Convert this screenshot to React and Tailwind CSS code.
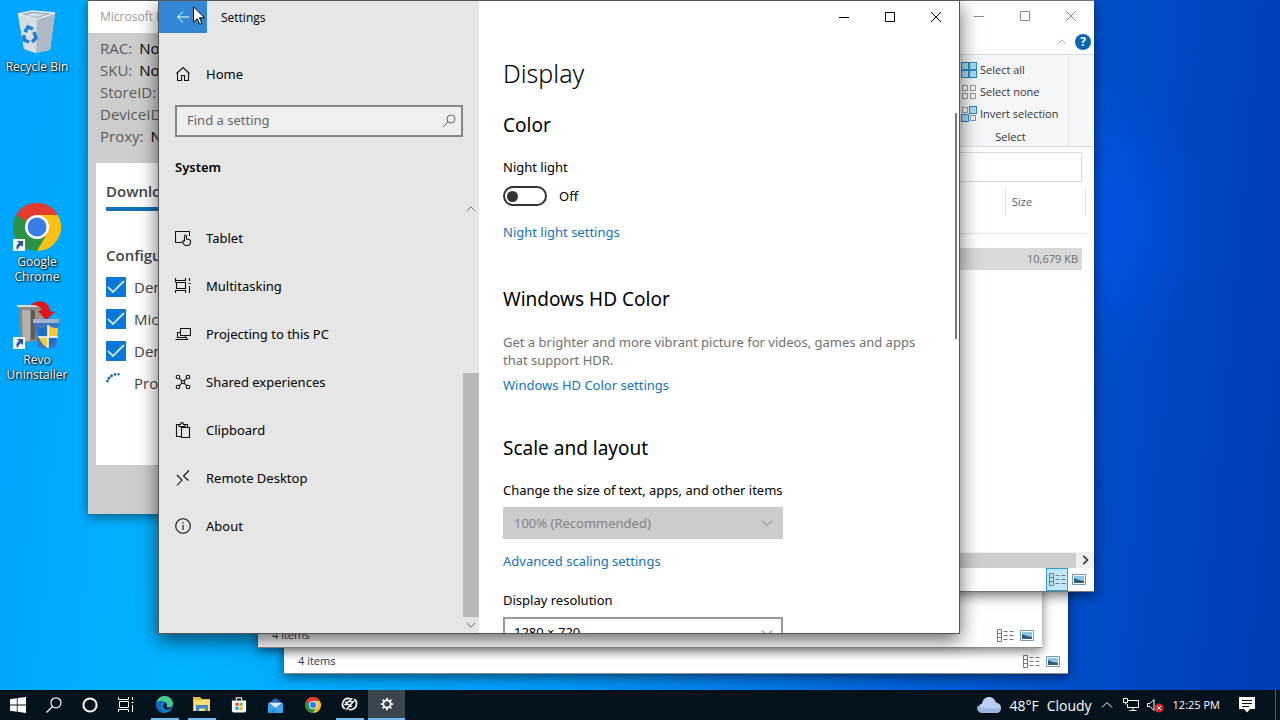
import React, { useState } from 'react';

const navItems = [
  { label: 'Tablet', icon: 'tablet' },
  { label: 'Multitasking', icon: 'multitasking' },
  { label: 'Projecting to this PC', icon: 'projecting' },
  { label: 'Shared experiences', icon: 'shared' },
  { label: 'Clipboard', icon: 'clipboard' },
  { label: 'Remote Desktop', icon: 'remote' },
  { label: 'About', icon: 'about' },
];

const navPaths = {
  home: <path d="M1.500 7.500 8 1.500l6.500 6M2.500 6.500v8h4v-5h3v5h4v-8" />,
  tablet: (
    <>
      <path d="M7 12.500H.5v-11h14V6" />
      <path d="M9.500 11V6.200c0-1.600 2-1.600 2 0V9l3 .8c.8.200 1 .7 1 1.400v1.300c0 1.800-1.200 3-3 3h-1.200c-1.200 0-2-.5-2.600-1.500L7.500 11.500c.5-1 1.400-.8 2 0" />
    </>
  ),
  multitasking: <path d="M.5 0v2.500h10V0M.5 15v-2.500h10V15M1.500 4.500h9v6h-9zM.5 2.500v2M14.500 0v3M14.500 8v7M13.500 5.500h2" />,
  projecting: <path d="M5.500 2.500h10v7h-10zM5.500 6.500h-3v5h8v-2M.5 13.500h12l-1.500-2" />,
  shared: (
    <>
      <circle cx="3" cy="3" r="1.800" />
      <circle cx="13" cy="3" r="1.800" />
      <circle cx="3" cy="13" r="1.800" />
      <circle cx="13" cy="13" r="1.800" />
      <circle cx="8" cy="8" r="1.500" />
      <path d="m4.300 4.300 2.600 2.600M11.700 4.300 9.100 6.900M4.300 11.700l2.600-2.600M11.700 11.700 9.100 9.100" />
    </>
  ),
  clipboard: <path d="M6 14.500H1.500v-12H4M10 2.500h2.500v3M4 4.500v-2h1.500C5.500 0 8.500 0 8.500 2.500H10v2zM6.500 5.500h8v10h-8z" />,
  remote: <path d="m2 5 5 5-5 5.500M14 .5 8.500 6l5 4.500" />,
  about: (
    <>
      <circle cx="8" cy="8" r="7.300" />
      <path d="M8 7v5M8 4v1.500" />
    </>
  ),
};

const NavIcon = ({ name }) => (
  <svg viewBox="0 0 16 16" className="w-4 h-4 shrink-0" fill="none" stroke="#111" strokeWidth="1.100">
    {navPaths[name]}
  </svg>
);

const Chevron = ({ className, dir = 'down' }) => {
  const d = {
    down: 'M1 3.500 6 8.500l5-5',
    up: 'M1 8.500 6 3.500l5 5',
    right: 'm4 1 5 5-5 5',
  };
  return (
    <svg viewBox="0 0 12 12" className={className} fill="none" stroke="currentColor">
      <path d={d[dir]} />
    </svg>
  );
};

const CaptionButtons = () => (
  <div className="flex justify-end">
    <button aria-label="Minimize" className="w-[46px] h-8 grid place-items-center">
      <svg className="w-3 h-3" fill="none" stroke="currentColor"><path d="M1 6.500h10" /></svg>
    </button>
    <button aria-label="Maximize" className="w-[46px] h-8 grid place-items-center">
      <svg className="w-3 h-3" fill="none" stroke="currentColor"><path d="M1.500 1.500h9v9h-9z" /></svg>
    </button>
    <button aria-label="Close" className="w-[46px] h-8 grid place-items-center">
      <svg className="w-3 h-3" fill="none" stroke="currentColor"><path d="m1 1 10 10M11 1 1 11" /></svg>
    </button>
  </div>
);

const ChromeLogo = ({ className }) => (
  <svg viewBox="0 0 48 48" className={className}>
    <path d="M24 24 3.200 12A24 24 0 0 1 44.800 12z" fill="#e33b2e" />
    <path d="M24 24V12h20.800A24 24 0 0 1 24 48z" fill="#fbc116" />
    <path d="M24 24 34.400 30 24 48A24 24 0 0 1 3.200 12z" fill="#2b9246" />
    <path d="M24 12h20.800A24 24 0 0 0 3.200 12l10.400 18z" fill="#e33b2e" />
    <path d="M3.200 12 13.600 30 24 34V24z" fill="#2b9246" />
    <circle cx="24" cy="24" r="12" fill="#fff" />
    <circle cx="24" cy="24" r="9.500" fill="#3a7de8" />
  </svg>
);

const ShortcutArrow = () => (
  <svg viewBox="0 0 12 12" className="absolute left-0 bottom-0 w-3 h-3">
    <path d="M0 0h12v12H0z" fill="#f4f6f8" />
    <path d="M4 2h6v6L8 6.200C6 7.500 5 9 4.500 11 2.500 8.500 3.500 5.500 6 4z" fill="#2a559c" />
  </svg>
);

const RecycleBin = () => (
  <svg viewBox="0 0 48 48" className="w-12 h-12">
    <path d="m5 6 37-1-5 37-14 3-12-4z" fill="#c9d3dc" />
    <path d="m5 6 19 5-1 34-12-4z" fill="#d6dee5" />
    <path d="m24 11 18-6-5 37-14 3z" fill="#aebbc7" />
    <path d="m5 6 14-3 23 2-18 6z" fill="#8fa6b8" stroke="#e3eaf0" strokeWidth="1.500" />
    <path d="m12 7 8-2 14 1-10 3z" fill="#d3dee6" />
    <g fill="none" stroke="#1f7fd0" strokeWidth="3.500">
      <path d="m12 24 3-5 5 2" />
      <path d="m21 24 2 6-4 4" />
      <path d="M16 34l-5-2v-5" />
    </g>
  </svg>
);

const RevoLogo = () => (
  <svg viewBox="0 0 48 48" className="w-12 h-12">
    <path d="M4 4h30l-3 5H8z" fill="#8d8b88" />
    <path d="M6 5h24v34l-22 3z" fill="#8b8783" />
    <path d="M9 9h8v31l-7 1z" fill="#b5b1ac" />
    <path d="M18 9h4v29l-4 1z" fill="#5f5b58" />
    <path d="M22 9h8v12h-8z" fill="#98948f" />
    <path d="M4 5h28" stroke="#dedcd9" strokeWidth="2" />
    <path d="M18 4c6-6 18-5 19 6l5 1-9 8-8-9 4-1c-1-3-6-5-11-5z" fill="#e2131f" />
    <path d="M21 21h25l-3 25c-5 2-13 2-18 0z" fill="#3f74c4" />
    <path d="M20 18h26v4H20z" fill="#9fb3cf" />
    <path d="M35 24c4 3 7 3 10 3 0 9-2 16-10 20-8-4-10-11-10-20 3 0 6 0 10-3z" fill="#f8c838" />
    <path d="M35 24v12H25.500C25 33 25 30 25 27c3 0 6 0 10-3zM35 36h9.500C43 41 40 45 35 47z" fill="#1d6fbf" />
    <path d="M35 24v23M25 36h20" stroke="#fff" strokeWidth="1.500" />
  </svg>
);

const DesktopIcon = ({ label, shortcut, children }) => (
  <button className="w-[74px] flex flex-col items-center gap-[3px] text-white">
    <span className="relative w-12 h-12">
      {children}
      {shortcut && <ShortcutArrow />}
    </span>
    <span className="w-16 text-[12px] leading-[15px] text-center [text-shadow:1px_1px_2px_#000,0_0_2px_#000]">
      {label}
    </span>
  </button>
);

const ViewIcons = ({ selected }) => (
  <div className="flex items-center">
    <button
      aria-label="Details view"
      className={
        selected
          ? 'w-[22px] h-[23px] grid place-items-center border border-[#26a0da] bg-[#bfe8f9]'
          : 'w-[22px] h-[23px] grid place-items-center'
      }
    >
      <svg viewBox="0 0 17 13" className="w-[17px] h-[13px]" fill="none" stroke="#777">
        <path d="M.5.5h4v12h-4zM.5 4.500h4M.5 8.500h4M6.500 2.500h4M12.500 2.500h4M6.500 6.500h4M12.500 6.500h4M6.500 10.500h4M12.500 10.500h4" />
      </svg>
    </button>
    <button aria-label="Large icons view" className="w-[22px] h-[23px] grid place-items-center">
      <svg viewBox="0 0 14 11" className="w-[14px] h-[11px]">
        <path d="M.5.500h13v10H.5z" fill="#fff" stroke="#6f9ab8" />
        <path d="M2 2h10v7H2z" fill="#8fc4e8" />
        <path d="m2 4 5 2 5 1v2H2z" fill="#2f5f78" />
      </svg>
    </button>
  </div>
);

const BackExplorer = ({ className }) => (
  <div className={`absolute w-[784px] h-[592px] bg-white border-b border-[#8a8a8a] shadow-[0_3px_10px_#0008] flex flex-col justify-end ${className}`}>
    <div className="flex justify-between items-center pl-[14px] pr-1 text-[#1e395b] text-[11px]">
      <span>4 items</span>
      <ViewIcons />
    </div>
  </div>
);

const SelectIcon = ({ kind }) => {
  const on = { all: [1, 1, 1, 1], none: [0, 0, 0, 0], invert: [0, 1, 1, 0] }[kind];
  return (
    <svg viewBox="0 0 16 16" className="w-4 h-4" strokeWidth="1">
      {on.map((v, i) => {
        const x = (i % 2) * 8;
        const y = i > 1 ? 8 : 0;
        return v ? (
          <rect key={i} x={x + 0.5} y={y + 0.5} width="7" height="7" fill="#a9dcf7" stroke="#2a8ac8" />
        ) : (
          <rect key={i} x={x + 1.5} y={y + 1.5} width="5" height="5" fill="#fafafa" stroke="#999" />
        );
      })}
    </svg>
  );
};

const Explorer = () => (
  <div className="absolute left-[310px] top-0 w-[784px] h-[592px] bg-white border-y border-[#777] shadow-[0_3px_12px_#0009] flex flex-col text-[#333]">
    <div className="text-[#888] h-[29px] flex flex-col justify-center">
      <CaptionButtons />
    </div>
    <div className="h-6 flex justify-end items-center gap-2 pr-[3px]">
      <Chevron dir="up" className="w-[10px] h-[10px] text-[#999]" />
      <button aria-label="Help" className="w-4 h-4 rounded-full bg-[#0a64b8] text-white text-[12px] leading-4 font-bold">?</button>
    </div>
    <div className="h-[93px] bg-[#f5f6f7] border-y border-[#dadbdc] flex justify-end pr-[25px]">
      <div className="w-[115px] border-r border-[#e2e3e4] pt-1 pl-[7px] flex flex-col text-[11px]">
        <button className="h-[22px] flex items-center gap-[3px]"><SelectIcon kind="all" />Select all</button>
        <button className="h-[22px] flex items-center gap-[3px]"><SelectIcon kind="none" />Select none</button>
        <button className="h-[22px] flex items-center gap-[3px]"><SelectIcon kind="invert" />Invert selection</button>
        <span className="pt-1 pr-2 leading-4 text-center">Select</span>
      </div>
    </div>
    <input aria-label="Search" className="h-[30px] mt-[5px] ml-3 mr-3 border border-[#d9d9d9] bg-white" />
    <table className="mt-[6px] mr-[7px] text-[11px]">
      <thead>
        <tr className="border-b border-[#e5e5e5]">
          <th className="h-[45px]" />
          <th className="w-[82px] h-[45px] align-top font-normal text-left text-[#4c607a]">
            <div className="h-7 w-[81px] border-x border-[#e5e5e5] pl-[6px] leading-7">Size</div>
          </th>
        </tr>
      </thead>
      <tbody>
        <tr>
          <td className="pt-[14px]"><div className="h-[22px] bg-[#d9d9d9]" /></td>
          <td className="pt-[14px]">
            <div className="h-[22px] w-[77px] bg-[#d9d9d9] pr-1 leading-[22px] text-right text-[#6d6d6d]">10,679 KB</div>
          </td>
        </tr>
      </tbody>
    </table>
    <div className="mt-auto h-4 bg-[#f0f0f0] flex items-center">
      <div className="flex-1 h-[15px] bg-[#cdcdcd]" />
      <div className="w-[18px] grid place-items-center">
        <Chevron dir="right" className="w-[10px] h-[10px] text-[#333] stroke-2" />
      </div>
    </div>
    <div className="flex justify-end pr-1">
      <ViewIcons selected />
    </div>
  </div>
);

const deviceInfo = [
  ['RAC:', 'None'],
  ['SKU:', 'None'],
  ['StoreID:', 'None'],
  ['DeviceID:', 'None'],
  ['Proxy:', 'None'],
];

const DemoWindow = () => (
  <div className="absolute left-[88px] top-0 w-[420px] h-[514px] bg-[#cdcdcd] border-t border-[#555] shadow-[0_3px_10px_#0007] flex flex-col text-[15px] text-[#444]">
    <div className="h-8 shrink-0 bg-white pl-3 text-[12px] leading-8 text-[#999]">Microsoft Retail</div>
    <dl className="pl-3 pt-1 text-[#5a5a5a]">
      {deviceInfo.map(([key, value]) => (
        <div key={key} className="flex gap-[7px] h-[22px] leading-[22px]">
          <dt>{key}</dt>
          <dd className="text-black">{value}</dd>
        </div>
      ))}
    </dl>
    <div className="mx-2 mt-4 h-[302px] bg-white pl-[10px] pt-4">
      <h2 className="font-semibold leading-6 text-[#444]">Downloading</h2>
      <div className="mt-1 h-1 bg-[#1470b8]" />
      <h2 className="mt-8 font-semibold leading-6 text-[#444]">Configuring</h2>
      <div className="mt-1 flex flex-col">
        {['Demo', 'Micro', 'Demo'].map((label, i) => (
          <label key={i} className="h-8 flex items-center gap-2">
            <span className="grid">
              <input type="checkbox" defaultChecked className="appearance-none col-start-1 row-start-1 w-5 h-5 bg-[#0a78d6]" />
              <svg viewBox="0 0 20 20" className="col-start-1 row-start-1 w-5 h-5 pointer-events-none" fill="none" stroke="#fff" strokeWidth="1.500">
                <path d="m2 10 5 5L18 4" />
              </svg>
            </span>
            {label}
          </label>
        ))}
        <div className="h-8 flex items-center gap-2">
          <svg viewBox="0 0 20 20" className="w-5 h-5" fill="#1f6aa8">
            <circle cx="1.500" cy="8" r="1.400" />
            <circle cx="3" cy="5" r="1.500" />
            <circle cx="5.500" cy="2.700" r="1.500" />
            <circle cx="9" cy="1.400" r="1.300" />
            <circle cx="12.500" cy="1.200" r="1.200" />
          </svg>
          Process
        </div>
      </div>
    </div>
  </div>
);

const Sidebar = () => (
  <aside className="w-80 shrink-0 bg-[#e6e6e6] flex flex-col">
    <div className="h-8 shrink-0 flex items-center gap-[14px] text-[12px] font-['Open_Sans',sans-serif]">
      <button aria-label="Back" className="w-12 h-8 grid place-items-center bg-[#3388d6]">
        <svg viewBox="0 0 14 14" className="w-[14px] h-[14px]" fill="none" stroke="#fff">
          <path d="M13 7H1.500M7 1.500 1.500 7 7 12.500" />
        </svg>
      </button>
      <span className="pt-[2px]">Settings</span>
    </div>
    <a href="#home" className="mt-[17px] h-12 flex items-center gap-[15px] pl-4">
      <NavIcon name="home" />
      <span className="pt-[2px]">Home</span>
    </a>
    <label className="mt-[7px] mx-4 h-8 flex items-center border-2 border-[#868686] bg-[#efefef] pl-[10px] pr-1">
      <input type="search" aria-label="Find a setting" placeholder="Find a setting" className="flex-1 min-w-0 bg-transparent outline-none placeholder:text-[#666]" />
      <svg viewBox="0 0 16 16" className="w-4 h-4" fill="none" stroke="#666">
        <circle cx="10" cy="6" r="4" />
        <path d="M7 9 2 14" />
      </svg>
    </label>
    <h2 className="mt-5 pl-4 leading-5 font-semibold">System</h2>
    <div className="mt-6 flex-1 min-h-0 flex">
      <nav className="flex-1 pt-[13px] overflow-hidden">
        {navItems.map((item) => (
          <a key={item.label} href="#nav" className="h-12 flex items-center gap-[15px] pl-4">
            <NavIcon name={item.icon} />
            <span className="pt-[2px]">{item.label}</span>
          </a>
        ))}
      </nav>
      <div className="w-4 flex flex-col items-center text-[#555]">
        <Chevron dir="up" className="w-[10px] h-[10px] my-[3px]" />
        <div className="mt-auto h-[244px] w-4 bg-[#b8b8b8]" />
        <Chevron className="w-[10px] h-[10px] my-[3px]" />
      </div>
    </div>
  </aside>
);

const DisplayPane = () => {
  const [nightLight, setNightLight] = useState(false);

  return (
    <main className="relative flex-1 min-w-0 bg-white flex flex-col">
      <CaptionButtons />
      <div className="flex-1 min-h-0 overflow-hidden pl-6 pt-[22px] flex flex-col items-start">
        <h1 className="text-[25px] leading-9 font-light">Display</h1>
        <h2 className="mt-5 text-[19px] leading-7">Color</h2>
        <label htmlFor="night-light" className="mt-[18px] leading-5">Night light</label>
        <div className="mt-[9px] h-5 flex items-center gap-3">
          <input
            id="night-light"
            type="checkbox"
            role="switch"
            checked={nightLight}
            onChange={(e) => setNightLight(e.target.checked)}
            className="appearance-none w-11 h-5 rounded-full border-2 border-[#333] flex items-center px-[2px] checked:justify-end before:content-[''] before:w-[11px] before:h-[11px] before:rounded-full before:bg-[#333]"
          />
          <span className="pt-[2px]">{nightLight ? 'On' : 'Off'}</span>
        </div>
        <a href="#night-light" className="mt-4 leading-5 text-[#1272bb]">Night light settings</a>

        <h2 className="mt-[43px] text-[19px] leading-7">Windows HD Color</h2>
        <p className="mt-5 w-[430px] leading-[18px] text-[#707070]">
          Get a brighter and more vibrant picture for videos, games and apps that support HDR.
        </p>
        <a href="#hd-color" className="mt-[6px] leading-5 text-[#1272bb]">Windows HD Color settings</a>

        <h2 className="mt-[39px] text-[19px] leading-7">Scale and layout</h2>
        <label htmlFor="scale" className="mt-[18px] leading-5">Change the size of text, apps, and other items</label>
        <div className="mt-[7px] w-[280px] grid items-center shrink-0 text-[#838383]">
          <select id="scale" disabled className="appearance-none col-start-1 row-start-1 h-8 bg-[#cccccc] pl-[11px] pt-[2px] opacity-100">
            <option>100% (Recommended)</option>
          </select>
          <Chevron className="col-start-1 row-start-1 w-3 h-3 justify-self-end mr-[10px] pointer-events-none" />
        </div>
        <a href="#scaling" className="mt-3 leading-5 text-[#1272bb]">Advanced scaling settings</a>
        <label htmlFor="resolution" className="mt-[19px] leading-5">Display resolution</label>
        <div className="mt-[7px] w-[280px] grid items-center shrink-0">
          <select id="resolution" className="appearance-none col-start-1 row-start-1 h-8 bg-white border-2 border-[#999] pl-[9px]">
            <option>1280 × 720</option>
          </select>
          <Chevron className="col-start-1 row-start-1 w-3 h-3 justify-self-end mr-[10px] pointer-events-none text-[#555]" />
        </div>
      </div>
      {/* thin overlay scrollbar */}
      <div className="absolute right-[2px] top-28 w-[2px] h-[226px] bg-[#777]" />
    </main>
  );
};

const SettingsWindow = () => (
  <div className="absolute left-[158px] top-0 w-[802px] h-[634px] border border-[#555] shadow-[0_6px_18px_#0009] flex text-[13px] text-black font-['Noto_Sans','Open_Sans',sans-serif]">
    <Sidebar />
    <DisplayPane />
  </div>
);

const taskApps = [
  { name: 'Edge', bar: 'short' },
  { name: 'File Explorer', bar: 'short' },
  { name: 'Store' },
  { name: 'Mail' },
  { name: 'Chrome' },
  { name: 'Retail Demo', bar: 'short' },
  { name: 'Settings', bar: 'full' },
];

const appIcons = {
  Edge: (
    <svg viewBox="0 0 18 18" className="w-[17px] h-[17px]">
      <circle cx="9" cy="9" r="9" fill="#1683d4" />
      <path d="M.5 7C2 1.500 7-.5 11 .3c5 1 7 5 7 8 0 3-4 4.700-7 3.200 1-1 1.500-3-.5-4.500C7.500 5 3 5 .5 7z" fill="#43c98c" />
      <path d="M.3 7.500C3 4.500 7 5 9.500 6.500c-3 0-4.500 2.500-4 5.500.5 3 3 5.500 6.500 5.500C5 20-1 14 .3 7.500z" fill="#1467b8" />
      <path d="M9.500 6.800c2.500 1.200 2.500 3.700 1.500 4.700 1 1 4.500 1 6-.2-1.500 3.500-6 4.200-8.200 1.900-1.800-2-1.600-5 .7-6.400z" fill="#06202e" />
    </svg>
  ),
  'File Explorer': (
    <svg viewBox="0 0 18 16" className="w-[18px] h-4">
      <path d="M0 1h7l2 2h8v12H0z" fill="#e8b73b" />
      <path d="M1 4h16v11H1z" fill="#fbdc75" />
      <path d="M3 9h12v6h-3v-2.500H6V15H3z" fill="#3c8cc9" />
    </svg>
  ),
  Store: (
    <svg viewBox="0 0 18 18" className="w-4 h-4">
      <path d="M6 4V1h6v3" fill="none" stroke="#eee" strokeWidth="1.300" />
      <path d="M1 4h16v11.500a2 2 0 0 1-2 2H3a2 2 0 0 1-2-2z" fill="#f7f7f7" />
      <path d="M5 6.500h3.500V10H5z" fill="#e8532f" />
      <path d="M9.500 6.500H13V10H9.500z" fill="#7fb82f" />
      <path d="M5 11h3.500v3.500H5z" fill="#22a2e8" />
      <path d="M9.500 11H13v3.500H9.500z" fill="#f6b61c" />
    </svg>
  ),
  Mail: (
    <svg viewBox="0 0 18 16" className="w-[17px] h-[15px]">
      <path d="M1 6 9 0l8 6v10H1z" fill="#1a6fc4" />
      <path d="M2 5h14l-7 6z" fill="#dcebf7" />
      <path d="m1 5 8 6 8-6v11H1z" fill="#3ba4ec" />
      <path d="m1 16 8-6v6z" fill="#2b8fdc" />
    </svg>
  ),
  Chrome: <ChromeLogo className="w-4 h-4" />,
  'Retail Demo': (
    <svg viewBox="0 0 18 16" className="w-[17px] h-4" fill="none" stroke="#fff" strokeWidth="1.800">
      <path d="M10 2.500C5 1 1.500 4.500 1.500 8.500c0 2 1 3.800 3 4.500M8 13.500c5 1.500 8.500-2 8.500-6 0-2-1-3.800-3-4.500" />
      <path d="M12 2 4.500 8.500H9M9 5.500h4L5.500 14M4 6h4M9 10.500h3" strokeWidth="1.500" />
    </svg>
  ),
  Settings: (
    <svg viewBox="0 0 16 16" className="w-[14px] h-[14px]" fill="none" stroke="#fff">
      <circle cx="8" cy="8" r="4.200" strokeWidth="2" />
      <path d="M8 1v3M8 12v3M1 8h3M12 8h3M3 3l2 2M11 11l2 2M13 3l-2 2M5 11l-2 2" strokeWidth="2" />
    </svg>
  ),
};

const Taskbar = () => (
  <footer className="h-[30px] shrink-0 flex items-stretch bg-[#03121b] text-white">
    <button aria-label="Start" className="w-9 grid place-items-center">
      <svg viewBox="0 0 16 16" className="w-4 h-4" fill="#fff">
        <path d="m0 2.200 6.800-1v6.400H0zM7.600 1.100 16 0v7.600H7.600zM0 8.400h6.800v6.400l-6.800-1zM7.600 8.400H16V16l-8.400-1.200z" />
      </svg>
    </button>
    <button aria-label="Search" className="w-9 grid place-items-center">
      <svg viewBox="0 0 16 16" className="w-4 h-4" fill="none" stroke="#fff" strokeWidth="1.200">
        <circle cx="10" cy="5.800" r="5" />
        <path d="M6.500 9.500.5 15.500" />
      </svg>
    </button>
    <button aria-label="Cortana" className="w-9 grid place-items-center">
      <svg viewBox="0 0 16 16" className="w-4 h-4" fill="none" stroke="#fff" strokeWidth="2">
        <circle cx="8" cy="8" r="6.600" />
      </svg>
    </button>
    <button aria-label="Task View" className="w-9 grid place-items-center mr-[2px]">
      <svg viewBox="0 0 16 16" className="w-4 h-4" fill="none" stroke="#fff">
        <path d="M.5 0v2.500h10V0M.5 15v-2.500h10V15M1.500 4.500h9v6h-9zM14.500 0v3M14.500 8v7M13.500 5.500h2" />
      </svg>
    </button>
    {taskApps.map((app) => (
      <button
        key={app.name}
        aria-label={app.name}
        className={app.bar === 'full' ? 'w-[37px] flex flex-col items-center bg-[#39464e]' : 'w-[37px] flex flex-col items-center'}
      >
        <span className="flex-1 grid place-items-center">{appIcons[app.name]}</span>
        <span className={app.bar === 'full' ? 'w-full h-[2px] bg-[#76b9ed]' : app.bar === 'short' ? 'w-7 h-[2px] bg-[#76b9ed]' : 'h-0'} />
      </button>
    ))}
    <div className="ml-auto flex items-center">
      <button className="flex items-center gap-2 text-[14px]">
        <svg viewBox="0 0 24 16" className="w-6 h-4">
          <path d="M5 16a5 5 0 0 1 0-9.500C6 2 9 0 12 0c4 0 6 2.500 7 5.500 3 .5 5 2.500 5 5.500 0 3-2 5-5 5z" fill="#bccdf0" />
          <path d="M5 16a5 5 0 0 1-4.500-7C6 12 17 12 24 10.500c.3 3-2 5.500-5 5.500z" fill="#9db3e4" />
        </svg>
        48°F
        <span>Cloudy</span>
      </button>
      <button aria-label="Show hidden icons" className="ml-[9px]">
        <Chevron dir="up" className="w-3 h-3" />
      </button>
      <svg viewBox="0 0 16 14" className="ml-[10px] w-4 h-[14px]" fill="none" stroke="#fff">
        <path d="M5 2.500h10.500v7H4.500V6M.5.500h4v4h-4zM2.500 4.500v2M10 9.500v3M6.500 12.500h7" />
      </svg>
      <svg viewBox="0 0 17 15" className="ml-2 w-[17px] h-[15px]" fill="none" stroke="#fff">
        <path d="M.5 5.500h2.500l4-4v11l-4-4H.5z" />
        <circle cx="12" cy="10" r="4.500" fill="#d9252f" stroke="none" />
        <path d="m10 8 4 4M14 8l-4 4" />
      </svg>
      <time className="ml-[9px] text-[11px]">12:25 PM</time>
      <button aria-label="Notifications" className="ml-[19px]">
        <svg viewBox="0 0 16 16" className="w-4 h-4">
          <path d="M0 0h16v12h-5l-3 3.500L5 12H0z" fill="#fff" />
          <path d="M3 3.500h10M3 6.500h10M3 9.500h7" stroke="#03121b" />
        </svg>
      </button>
      <div className="ml-5 mr-1 w-px h-[30px] bg-[#56616a]" />
    </div>
  </footer>
);

const App = () => (
  <div className="h-screen flex flex-col overflow-hidden font-['Open_Sans',sans-serif]">
    <div className="relative flex-1 min-h-0 overflow-hidden bg-[radial-gradient(ellipse_9%_22%_at_85%_32%,#0054e6_0%,#0054e600_100%),linear-gradient(95deg,#00a4fb_0%,#00b2ff_18%,#0098f4_45%,#0060d8_72%,#0048c4_88%,#003cb4_100%)]">
      <div className="flex flex-col pt-2">
        <DesktopIcon label="Recycle Bin"><RecycleBin /></DesktopIcon>
        <div className="mt-[129px] flex flex-col gap-[17px]">
          <DesktopIcon label="Google Chrome" shortcut><ChromeLogo className="w-12 h-12" /></DesktopIcon>
          <DesktopIcon label="Revo Uninstaller" shortcut><RevoLogo /></DesktopIcon>
        </div>
      </div>
      <BackExplorer className="left-[284px] top-[82px]" />
      <BackExplorer className="left-[258px] top-14" />
      <Explorer />
      <DemoWindow />
      <SettingsWindow />
      <svg viewBox="0 0 12 19" className="absolute left-[193px] top-[6px] w-3 h-[19px]">
        <path d="M.5.800v15.500l3.700-3.500 2.500 5.500 2.300-1-2.500-5.500h5z" fill="#fff" stroke="#000" />
      </svg>
    </div>
    <Taskbar />
  </div>
);

export default App;
